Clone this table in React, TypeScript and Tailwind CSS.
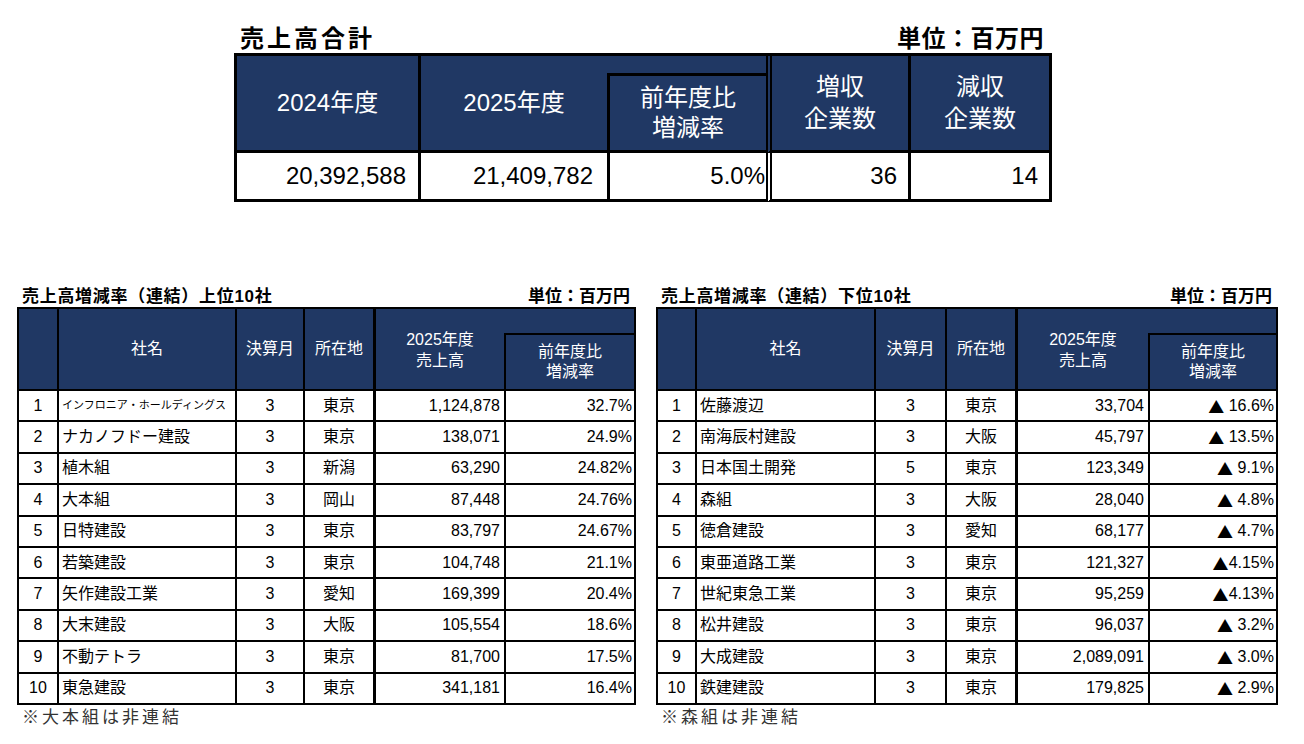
import React from "react";

type Row = [string, string, string, string, string, string];

const top10: Row[] = [
  ["1", "インフロニア・ホールディングス", "3", "東京", "1,124,878", "32.7%"],
  ["2", "ナカノフドー建設", "3", "東京", "138,071", "24.9%"],
  ["3", "植木組", "3", "新潟", "63,290", "24.82%"],
  ["4", "大本組", "3", "岡山", "87,448", "24.76%"],
  ["5", "日特建設", "3", "東京", "83,797", "24.67%"],
  ["6", "若築建設", "3", "東京", "104,748", "21.1%"],
  ["7", "矢作建設工業", "3", "愛知", "169,399", "20.4%"],
  ["8", "大末建設", "3", "大阪", "105,554", "18.6%"],
  ["9", "不動テトラ", "3", "東京", "81,700", "17.5%"],
  ["10", "東急建設", "3", "東京", "341,181", "16.4%"],
];

const bottom10: Row[] = [
  ["1", "佐藤渡辺", "3", "東京", "33,704", "▲ 16.6%"],
  ["2", "南海辰村建設", "3", "大阪", "45,797", "▲ 13.5%"],
  ["3", "日本国土開発", "5", "東京", "123,349", "▲ 9.1%"],
  ["4", "森組", "3", "大阪", "28,040", "▲ 4.8%"],
  ["5", "徳倉建設", "3", "愛知", "68,177", "▲ 4.7%"],
  ["6", "東亜道路工業", "3", "東京", "121,327", "▲4.15%"],
  ["7", "世紀東急工業", "3", "東京", "95,259", "▲4.13%"],
  ["8", "松井建設", "3", "東京", "96,037", "▲ 3.2%"],
  ["9", "大成建設", "3", "東京", "2,089,091", "▲ 3.0%"],
  ["10", "鉄建建設", "3", "東京", "179,825", "▲ 2.9%"],
];

const NAVY = "bg-[#203864]";

function Pct({ v }: { v: string }) {
  if (!v.startsWith("▲")) return <>{v}</>;
  return (
    <>
      <span className="font-['Noto_Sans_CJK_JP',sans-serif] text-[16px]">▲</span>
      {v.slice(1)}
    </>
  );
}

function RankTable({
  title,
  rows,
  note,
  cols,
  width,
}: {
  title: string;
  rows: Row[];
  note: string;
  cols: string;
  width: string;
}) {
  const hd = `${NAVY} text-white text-[16px] flex items-center justify-center text-center`;
  return (
    <div className={width}>
      <div className="flex justify-between items-end h-[20px] pl-[5px] pr-[6px]">
        <span className="text-[17px] leading-[20px] font-bold tracking-[0.7px]">{title}</span>
        <span className="text-[17px] leading-[20px] font-bold">単位：百万円</span>
      </div>
      <div className={`grid ${cols} grid-rows-[24px_58px_repeat(10,31.4px)] border-t-2 border-l-2 border-black`}>
        <div className={`${hd} row-span-2 border-r-2 border-b-2 border-black`}></div>
        <div className={`${hd} row-span-2 border-r-2 border-b-2 border-black`}>社名</div>
        <div className={`${hd} row-span-2 border-r-2 border-b-2 border-black`}>決算月</div>
        <div className={`${hd} row-span-2 border-r-[3px] border-b-2 border-black`}>所在地</div>
        <div className={`${hd} row-span-2 border-b-2 border-black leading-[21px] pt-[2px]`}>
          2025年度
          <br />
          売上高
        </div>
        <div className={`${NAVY} border-r-2 border-black`}></div>
        <div className={`${hd} border-t-2 border-l-2 border-r-2 border-b-2 border-black leading-[20px]`}>
          前年度比
          <br />
          増減率
        </div>
        {rows.map((r) => (
          <React.Fragment key={r[0]}>
            <div className="border-r-2 border-b-2 border-black flex items-center justify-center text-[16px]">{r[0]}</div>
            <div
              className={`border-r-2 border-b-2 border-black flex items-center pl-[3px] whitespace-nowrap overflow-hidden ${
                r[1].length > 10 ? "text-[11px]" : "text-[16px]"
              }`}
            >
              {r[1]}
            </div>
            <div className="border-r-2 border-b-2 border-black flex items-center justify-center text-[16px]">{r[2]}</div>
            <div className="border-r-[3px] border-b-2 border-black flex items-center justify-center text-[16px]">{r[3]}</div>
            <div className="border-b-2 border-black flex items-center justify-end pr-[4px] text-[16px]">{r[4]}</div>
            <div className="border-l-2 border-r-2 border-b-2 border-black flex items-center justify-end pr-[2px] text-[16px] whitespace-pre">
              <Pct v={r[5]} />
            </div>
          </React.Fragment>
        ))}
      </div>
      <div className="mt-[3px] pl-[5px] text-[17px] leading-[20px] tracking-[3px] text-[#333333]">{note}</div>
    </div>
  );
}

export default function App() {
  const th = `${NAVY} text-white text-[24px] flex items-center justify-center text-center`;
  const td = "bg-white text-[24px] flex items-center justify-end";
  return (
    <div className="w-[1304px] h-[744px] bg-white text-black overflow-hidden font-['Liberation_Sans','Noto_Sans_CJK_JP',sans-serif]">
      <section className="ml-[234px] w-[818px] pt-[24px]">
        <div className="flex justify-between items-end h-[29px] pl-[6px] pr-[8px]">
          <span className="text-[24px] leading-[29px] font-bold tracking-[3px]">売上高合計</span>
          <span className="text-[24px] leading-[29px] font-bold tracking-[0.5px]">単位：百万円</span>
        </div>
        <div className="grid grid-cols-[184px_186px_159px_145px_141px] grid-rows-[17px_80px_49px] border-t-[3px] border-l-[3px] border-black">
          <div className={`${th} row-span-2 border-r-[3px] border-b-[3px] border-black`}>2024年度</div>
          <div className={`${th} row-span-2 border-b-[3px] border-black`}>2025年度</div>
          <div className={`${NAVY}`}></div>
          <div
            className={`${th} row-span-2 border-l-[6px] [border-left-style:double] border-r-[3px] border-b-[3px] border-black leading-[32px]`}
          >
            増収
            <br />
            企業数
          </div>
          <div className={`${th} row-span-2 border-r-[3px] border-b-[3px] border-black leading-[32px]`}>
            減収
            <br />
            企業数
          </div>
          <div className={`${th} border-t-[3px] border-l-[3px] border-b-[3px] border-black leading-[30px]`}>
            前年度比
            <br />
            増減率
          </div>
          <div className={`${td} border-r-[3px] border-b-[3px] border-black pr-[12px]`}>20,392,588</div>
          <div className={`${td} border-b-[3px] border-black pr-[14px]`}>21,409,782</div>
          <div className={`${td} border-l-[3px] border-b-[3px] border-black pr-[1px]`}>5.0%</div>
          <div
            className={`${td} border-l-[6px] [border-left-style:double] border-r-[3px] border-b-[3px] border-black pr-[11px]`}
          >
            36
          </div>
          <div className={`${td} border-r-[3px] border-b-[3px] border-black pr-[11px]`}>14</div>
        </div>
      </section>
      <div className="flex gap-[20px] pl-[17px] mt-[85px]">
        <RankTable
          title="売上高増減率（連結）上位10社"
          rows={top10}
          note="※大本組は非連結"
          cols="grid-cols-[40px_178px_68px_71px_128px_132px]"
          width="w-[619px]"
        />
        <RankTable
          title="売上高増減率（連結）下位10社"
          rows={bottom10}
          note="※森組は非連結"
          cols="grid-cols-[39px_179px_71px_71px_130px_130px]"
          width="w-[622px]"
        />
      </div>
    </div>
  );
}
